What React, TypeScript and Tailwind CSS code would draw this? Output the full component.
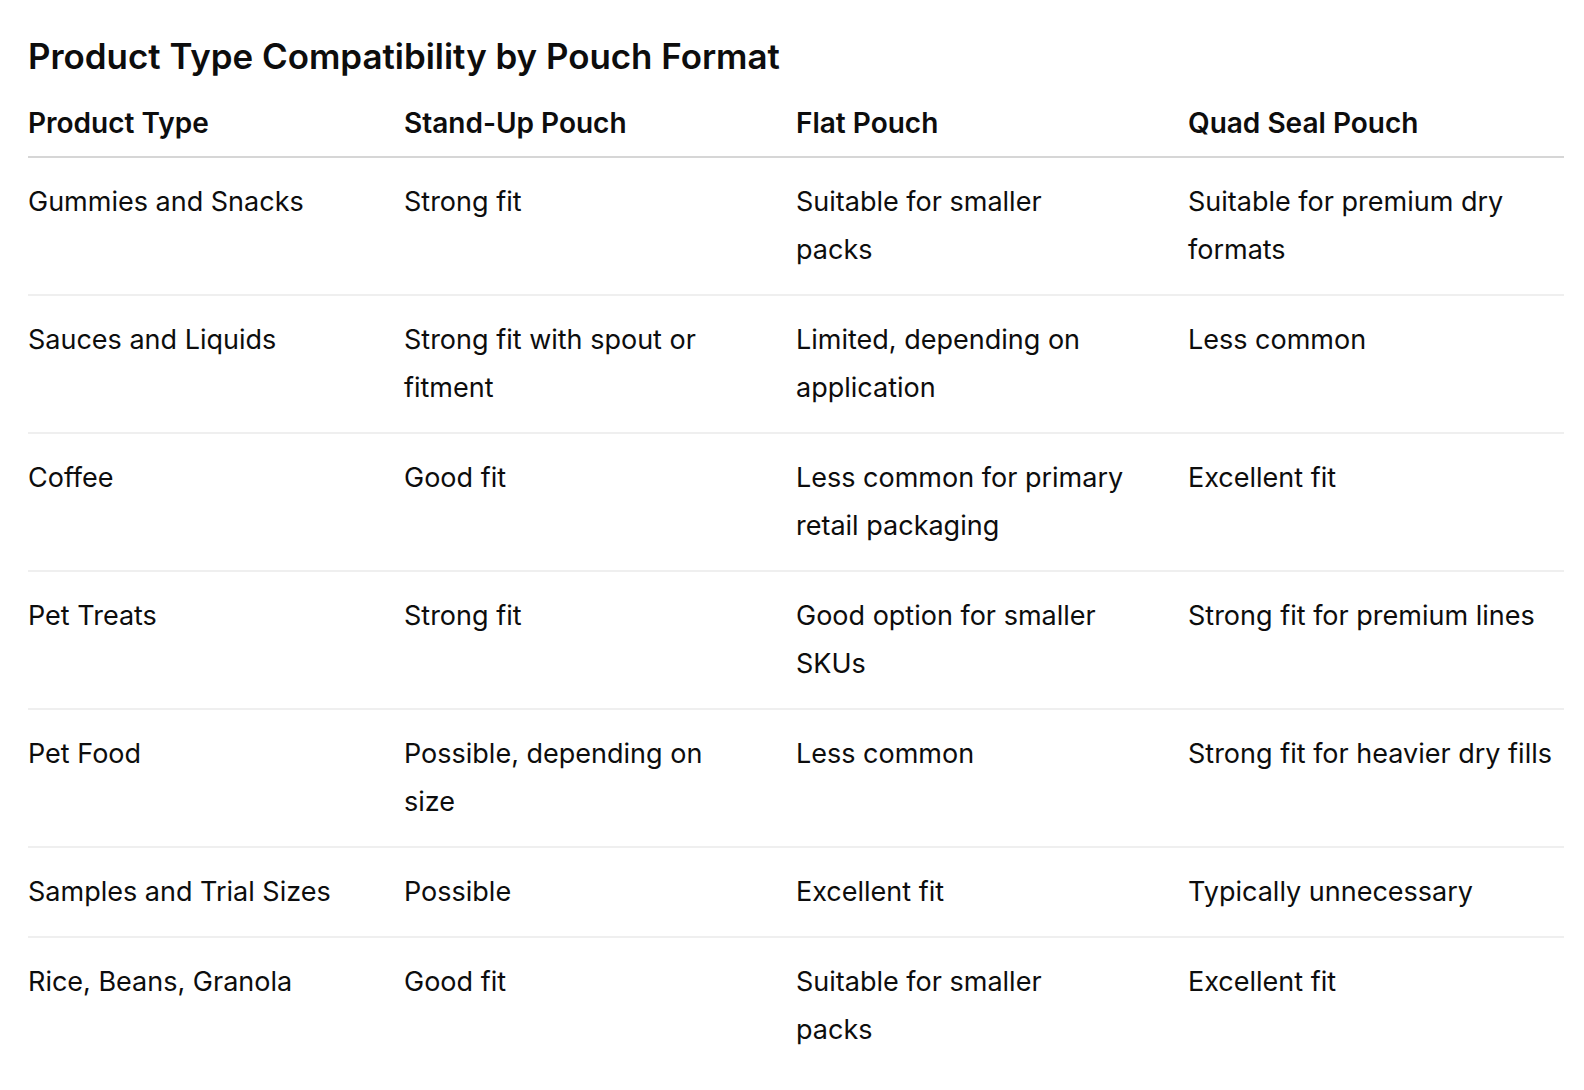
import React from "react";

const headers = ["Product Type", "Stand-Up Pouch", "Flat Pouch", "Quad Seal Pouch"];

// each cell is a list of lines, broken where the reference wraps
const rows: string[][][] = [
  [["Gummies and Snacks"], ["Strong fit"], ["Suitable for smaller", "packs"], ["Suitable for premium dry", "formats"]],
  [["Sauces and Liquids"], ["Strong fit with spout or", "fitment"], ["Limited, depending on", "application"], ["Less common"]],
  [["Coffee"], ["Good fit"], ["Less common for primary", "retail packaging"], ["Excellent fit"]],
  [["Pet Treats"], ["Strong fit"], ["Good option for smaller", "SKUs"], ["Strong fit for premium lines"]],
  [["Pet Food"], ["Possible, depending on", "size"], ["Less common"], ["Strong fit for heavier dry fills"]],
  [["Samples and Trial Sizes"], ["Possible"], ["Excellent fit"], ["Typically unnecessary"]],
  [["Rice, Beans, Granola"], ["Good fit"], ["Suitable for smaller", "packs"], ["Excellent fit"]],
];

export default function App() {
  return (
    <div
      className="min-h-screen bg-white text-[#0d0d0d] pl-[28px] pr-[20px] pt-[34px]"
      style={{ fontFamily: "Inter, 'Noto Sans', sans-serif" }}
    >
      <h2 className="text-[34.9px] font-semibold leading-[44px]">
        Product Type Compatibility by Pouch Format
      </h2>
      <table className="w-full table-fixed border-collapse mt-[21px]">
        <colgroup>
          <col className="w-[376px]" />
          <col className="w-[392px]" />
          <col className="w-[392px]" />
          <col className="w-[376px]" />
        </colgroup>
        <thead>
          <tr className="border-b-2 border-[#d6d6d6]">
            {headers.map((h) => (
              <th
                key={h}
                className="text-left align-bottom font-semibold text-[28px] leading-[48px] pt-0 pb-[9px] pr-[16px] last:pr-0 whitespace-nowrap"
              >
                {h}
              </th>
            ))}
          </tr>
        </thead>
        <tbody>
          {rows.map((row, i) => (
            <tr key={i} className="border-b-2 border-[#efefef] last:border-b-0">
              {row.map((lines, j) => (
                <td
                  key={j}
                  className="align-top text-[27px] leading-[48px] py-[20px] pr-[16px] last:pr-0 whitespace-nowrap"
                >
                  {lines.map((line, k) => (
                    <div key={k}>{line}</div>
                  ))}
                </td>
              ))}
            </tr>
          ))}
        </tbody>
      </table>
    </div>
  );
}
